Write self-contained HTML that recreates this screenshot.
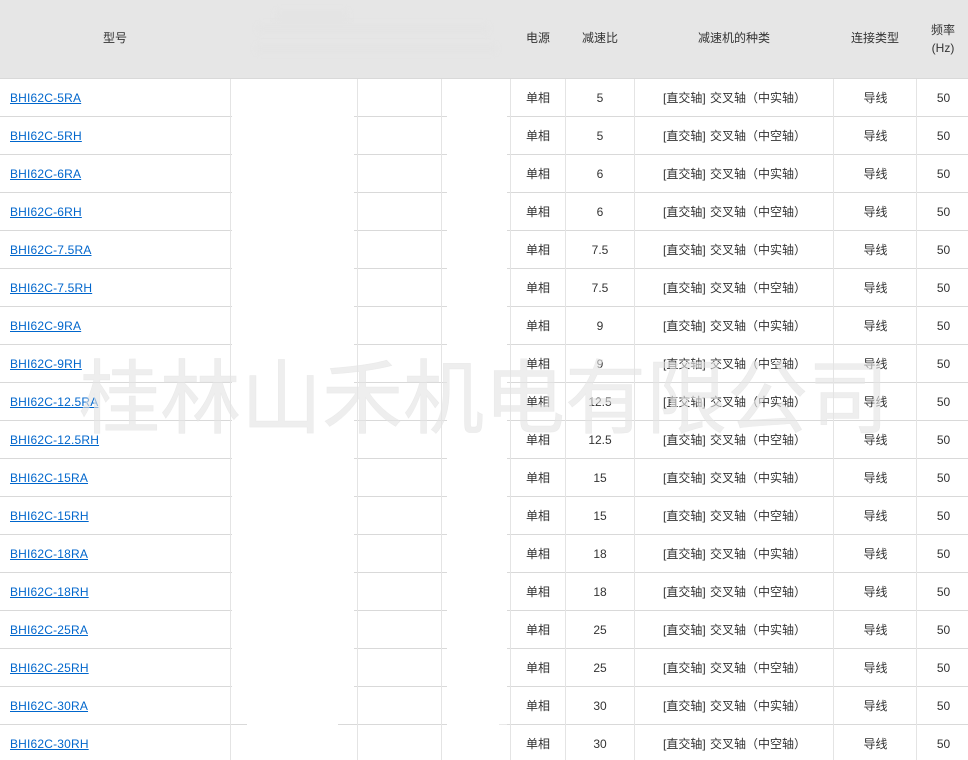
<!DOCTYPE html>
<html lang="zh-CN"><head><meta charset="utf-8"><title>BHI62C</title>
<style>
html,body{margin:0;padding:0;background:#fff}
#p{position:relative;width:968px;height:760px;overflow:hidden;background:#fff;font:12px/18px "Liberation Sans","Noto Sans CJK SC",sans-serif;color:#333}
.hd{position:absolute;left:0;top:0;width:968px;height:78px;background:#e6e6e6}
.bl{position:absolute;background:#e4e4e4;filter:blur(3px)}
.hl{position:absolute;left:0;top:78px;width:968px;height:684px;background:repeating-linear-gradient(to bottom,#d9d9d9 0,#d9d9d9 1px,transparent 1px,transparent 38px)}
.pt{position:absolute;background:#fff}
.v{position:absolute;top:79px;width:1px;height:681px;background:#e4e4e4}
.h{position:absolute;top:0;height:76px;display:flex;align-items:center;justify-content:center;text-align:center}
table{position:absolute;left:0;top:79px;width:968px;border-collapse:collapse;table-layout:fixed}
td{height:38px;padding:0;text-align:center;white-space:nowrap;vertical-align:middle;line-height:38px;word-spacing:1px}
td:first-child{text-align:left;padding-left:10px}
td:last-child{padding-left:2px}
td.t{padding-left:1px}
a{color:#06c;text-decoration:underline;font-size:12px;letter-spacing:.18px}
.wm{position:absolute;left:79px;top:345px;width:860px;font:81px/96px "Noto Sans CJK SC","WenQuanYi Zen Hei",sans-serif;color:rgba(228,228,228,.62);white-space:nowrap;-webkit-text-stroke:.5px rgba(228,228,228,.62)}
</style></head><body><div id="p">
<div class="hd">
<div class="bl" style="left:276px;top:10px;width:72px;height:12px"></div>
<div class="bl" style="left:258px;top:24px;width:230px;height:9px"></div>
<div class="bl" style="left:256px;top:44px;width:240px;height:9px"></div>
</div>
<div class="hl"></div>
<div class="pt" style="left:232px;top:79px;width:122px;height:681px"></div>
<div class="pt" style="left:447px;top:79px;width:60px;height:681px"></div>
<div class="pt" style="left:232px;top:724px;width:15px;height:1px;background:#d9d9d9"></div>
<div class="pt" style="left:338px;top:724px;width:16px;height:1px;background:#d9d9d9"></div>
<div class="pt" style="left:499px;top:724px;width:8px;height:1px;background:#e9e9e9"></div>
<div class="v" style="left:230px"></div><div class="v" style="left:357px"></div><div class="v" style="left:441px"></div><div class="v" style="left:510px"></div><div class="v" style="left:565px"></div><div class="v" style="left:634px"></div><div class="v" style="left:833px"></div><div class="v" style="left:916px"></div>
<div class="h" style="left:0;width:230px">型号</div>
<div class="h" style="left:510px;width:56px">电源</div>
<div class="h" style="left:566px;width:68px">减速比</div>
<div class="h" style="left:635px;width:198px">减速机的种类</div>
<div class="h" style="left:834px;width:82px">连接类型</div>
<div class="h" style="left:917px;width:52px;height:78px;line-height:18.5px">频率<br>(Hz)</div>
<table><colgroup><col style="width:510px"><col style="width:56px"><col style="width:68px"><col style="width:200px"><col style="width:83px"><col style="width:51px"></colgroup><tbody>
<tr><td><a>BHI62C-5RA</a></td><td>单相</td><td>5</td><td class="t">[直交轴] 交叉轴（中实轴）</td><td>导线</td><td>50</td></tr>
<tr><td><a>BHI62C-5RH</a></td><td>单相</td><td>5</td><td class="t">[直交轴] 交叉轴（中空轴）</td><td>导线</td><td>50</td></tr>
<tr><td><a>BHI62C-6RA</a></td><td>单相</td><td>6</td><td class="t">[直交轴] 交叉轴（中实轴）</td><td>导线</td><td>50</td></tr>
<tr><td><a>BHI62C-6RH</a></td><td>单相</td><td>6</td><td class="t">[直交轴] 交叉轴（中空轴）</td><td>导线</td><td>50</td></tr>
<tr><td><a>BHI62C-7.5RA</a></td><td>单相</td><td>7.5</td><td class="t">[直交轴] 交叉轴（中实轴）</td><td>导线</td><td>50</td></tr>
<tr><td><a>BHI62C-7.5RH</a></td><td>单相</td><td>7.5</td><td class="t">[直交轴] 交叉轴（中空轴）</td><td>导线</td><td>50</td></tr>
<tr><td><a>BHI62C-9RA</a></td><td>单相</td><td>9</td><td class="t">[直交轴] 交叉轴（中实轴）</td><td>导线</td><td>50</td></tr>
<tr><td><a>BHI62C-9RH</a></td><td>单相</td><td>9</td><td class="t">[直交轴] 交叉轴（中空轴）</td><td>导线</td><td>50</td></tr>
<tr><td><a>BHI62C-12.5RA</a></td><td>单相</td><td>12.5</td><td class="t">[直交轴] 交叉轴（中实轴）</td><td>导线</td><td>50</td></tr>
<tr><td><a>BHI62C-12.5RH</a></td><td>单相</td><td>12.5</td><td class="t">[直交轴] 交叉轴（中空轴）</td><td>导线</td><td>50</td></tr>
<tr><td><a>BHI62C-15RA</a></td><td>单相</td><td>15</td><td class="t">[直交轴] 交叉轴（中实轴）</td><td>导线</td><td>50</td></tr>
<tr><td><a>BHI62C-15RH</a></td><td>单相</td><td>15</td><td class="t">[直交轴] 交叉轴（中空轴）</td><td>导线</td><td>50</td></tr>
<tr><td><a>BHI62C-18RA</a></td><td>单相</td><td>18</td><td class="t">[直交轴] 交叉轴（中实轴）</td><td>导线</td><td>50</td></tr>
<tr><td><a>BHI62C-18RH</a></td><td>单相</td><td>18</td><td class="t">[直交轴] 交叉轴（中空轴）</td><td>导线</td><td>50</td></tr>
<tr><td><a>BHI62C-25RA</a></td><td>单相</td><td>25</td><td class="t">[直交轴] 交叉轴（中实轴）</td><td>导线</td><td>50</td></tr>
<tr><td><a>BHI62C-25RH</a></td><td>单相</td><td>25</td><td class="t">[直交轴] 交叉轴（中空轴）</td><td>导线</td><td>50</td></tr>
<tr><td><a>BHI62C-30RA</a></td><td>单相</td><td>30</td><td class="t">[直交轴] 交叉轴（中实轴）</td><td>导线</td><td>50</td></tr>
<tr><td><a>BHI62C-30RH</a></td><td>单相</td><td>30</td><td class="t">[直交轴] 交叉轴（中空轴）</td><td>导线</td><td>50</td></tr>
</tbody></table>
<div class="wm">桂林山禾机电有限公司</div>
</div></body></html>
